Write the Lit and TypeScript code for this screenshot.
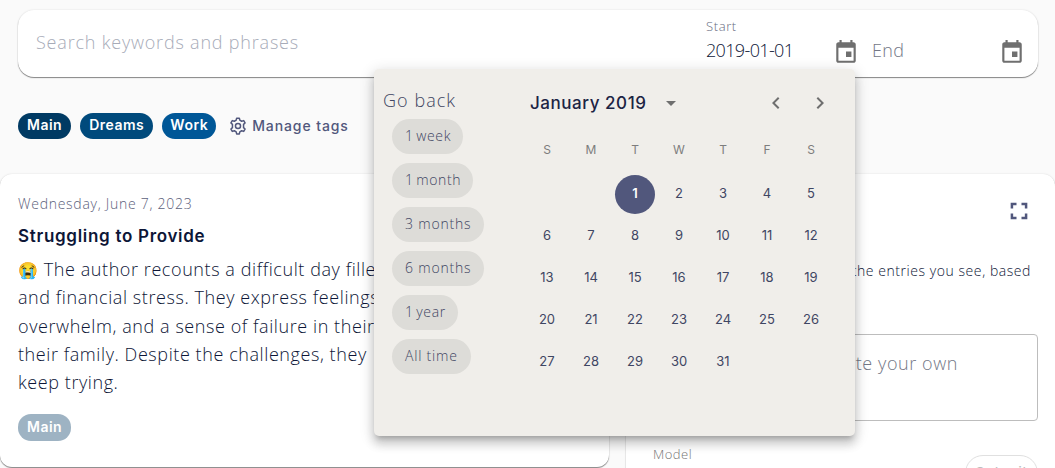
import {LitElement, html, css, svg} from 'lit';
import {customElement, property, state} from 'lit/decorators.js';
import {classMap} from 'lit/directives/class-map.js';

const ICONS = {
    event: svg`<path d="M19 3h-1V1h-2v2H8V1H6v2H5c-1.11 0-1.99.9-1.99 2L3 20c0 1.1.89 2 2 2h14c1.1 0 2-.9 2-2V5c0-1.1-.9-2-2-2zm0 17H5V8h14v12zm-2-8.5h-5v5h5v-5z"/>`,
    left: svg`<path d="M15.41 7.41 14 6l-6 6 6 6 1.41-1.41L10.83 12z"/>`,
    right: svg`<path d="M10 6 8.59 7.41 13.17 12l-4.58 4.59L10 18l6-6z"/>`,
    fullscreen: svg`<path d="M2 2h7v3H5v4H2zM15 2h7v7h-3V5h-4zM2 15h3v4h4v3H2zM19 15h3v7h-7v-3h4z"/>`,
    gear: svg`<g fill="none" stroke="currentColor" stroke-width="2" stroke-linejoin="round">
        <path d="M9.6 4.2 10.2 1.5h3.6l.6 2.7 2.5 1.45 2.7-.85 1.8 3.1-2 1.9v4.4l2 1.9-1.8 3.1-2.7-.85-2.5 1.45-.6 2.7h-3.6l-.6-2.7-2.5-1.45-2.7.85-1.8-3.1 2-1.9V9.8l-2-1.9 1.8-3.1 2.7.85z"/>
        <circle cx="12" cy="12" r="3.4"/>
    </g>`,
};

@customElement('app-icon')
export class AppIcon extends LitElement {
    static styles = css`
        :host {
            display: block;
            width: 24px;
            height: 24px;
            flex: none;
        }

        svg {
            display: block;
            width: 100%;
            height: 100%;
            fill: currentColor;
        }
    `;

    @property() name: keyof typeof ICONS = 'event';

    render() {
        return html`<svg viewBox="0 0 24 24">${ICONS[this.name]}</svg>`;
    }
}

@customElement('tag-chip')
export class TagChip extends LitElement {
    static styles = css`
        :host {
            display: block;
            box-sizing: border-box;
            height: 26px;
            padding: 0 9px;
            border-radius: 13px;
            background: #003a63;
            color: #fff;
            font: 600 14px/25px Inter, sans-serif;
            letter-spacing: 0.5px;
            text-align: center;
        }
    `;

    render() {
        return html`<slot></slot>`;
    }
}

@customElement('date-popup')
export class DatePopup extends LitElement {
    static styles = css`
        :host {
            display: flex;
            box-sizing: border-box;
            width: 481px;
            height: 367px;
            border-radius: 5px;
            background: #f0eeea;
            color: #3f4663;
            box-shadow: 0 5px 5px -3px rgba(0, 0, 0, 0.2), 0 8px 10px 1px rgba(0, 0, 0, 0.14), 0 3px 14px 2px rgba(0, 0, 0, 0.12);
        }

        .ranges {
            display: flex;
            flex-direction: column;
            align-items: flex-start;
            gap: 9px;
            box-sizing: border-box;
            width: 129px;
            padding: 20px 0 0 18px;
        }

        .heading {
            height: 21px;
            margin-left: -9px;
            font: 300 18px/23px "Open Sans", sans-serif;
            letter-spacing: 1.05px;
        }

        .range {
            box-sizing: border-box;
            height: 35px;
            padding: 0 13px 2px;
            border: none;
            border-radius: 18px;
            background: #dddcd8;
            color: inherit;
            font: 300 14px/33px "Open Sans", sans-serif;
            letter-spacing: 0.8px;
        }

        .range.single {
            padding-right: 12px;
            letter-spacing: 0.6px;
            word-spacing: -1.5px;
        }

        .calendar {
            width: 352px;
            padding: 14px 22px 0;
            box-sizing: border-box;
        }

        .header {
            display: flex;
            align-items: center;
            height: 40px;
            color: #6f6f6f;
        }

        .month {
            margin-left: 5px;
            color: #1c2444;
            font: 500 17px/24px Inter, sans-serif;
            letter-spacing: 0.55px;
        }

        .caret {
            margin-left: 19px;
            border: 5.5px solid transparent;
            border-top-color: currentColor;
            border-bottom: 0;
        }

        .arrows {
            display: flex;
            gap: 20px;
            margin: 0 1px 0 auto;
        }

        .grid {
            display: grid;
            grid-template-columns: repeat(7, 44px);
            justify-items: center;
            align-items: center;
        }

        .weekdays {
            height: 46px;
            padding-top: 4px;
            color: #7d7d7d;
            font: 400 12px/16px Inter, sans-serif;
        }

        .days {
            grid-auto-rows: 42px;
            font: 400 13px/36px Inter, sans-serif;
        }

        .day {
            width: 40px;
            height: 39px;
            border-radius: 50%;
            text-align: center;
        }

        .day.selected {
            background: #51577c;
            color: #fff;
            font-weight: 600;
        }
    `;

    @state() selected = 1;

    render() {
        const ranges = ['1 week', '1 month', '3 months', '6 months', '1 year', 'All time'];
        // January 2019 starts on a Tuesday
        const days = [0, 0, ...Array.from({length: 31}, (_, i) => i + 1)];
        return html`
            <div class="ranges">
                <div class="heading">Go back</div>
                ${ranges.map(r => html`
                    <button class=${classMap({range: true, single: r.startsWith('1')})}>${r}</button>`)}
            </div>
            <div class="calendar">
                <div class="header">
                    <span class="month">January 2019</span>
                    <span class="caret"></span>
                    <div class="arrows">
                        <app-icon name="left"></app-icon>
                        <app-icon name="right"></app-icon>
                    </div>
                </div>
                <div class="grid weekdays">${[...'SMTWTFS'].map(d => html`<span>${d}</span>`)}</div>
                <div class="grid days">
                    ${days.map(d => html`
                        <div class=${classMap({day: true, selected: d === this.selected})}
                             @click=${() => this._select(d)}>${d || null}</div>`)}
                </div>
            </div>
        `;
    }

    _select(day: number) {
        if (day) this.selected = day;
    }
}

@customElement('app-root')
export class AppRoot extends LitElement {
    static styles = css`
        :host {
            display: block;
            position: relative;
            box-sizing: border-box;
            width: 1055px;
            height: 468px;
            padding-top: 10px;
            overflow: hidden;
            background: #fafafa;
            color: #0d1637;
            font: 300 18px/28.3px "Open Sans", sans-serif;
            white-space: nowrap;
        }

        .surface {
            background: #fff;
            box-shadow: 0 1px 1px rgba(0, 0, 0, 0.45), 0 0 2px rgba(0, 0, 0, 0.12);
        }

        .search {
            display: flex;
            box-sizing: border-box;
            height: 67px;
            margin: 0 17px 0 18px;
            padding: 0 13px 0 18px;
            border-radius: 16px;
        }

        .placeholder {
            flex: 1;
            color: #a7abb8;
            line-height: 65px;
            letter-spacing: 0.8px;
        }

        .field {
            display: flex;
            box-sizing: border-box;
            width: 166px;
            color: #6f6f6f;
        }

        .field app-icon {
            width: 26px;
            height: 26px;
            margin: 29px 13px 0 auto;
        }

        .field.end app-icon {
            margin-right: 0;
        }

        .field.end {
            width: 153px;
        }

        .label {
            margin-top: 7px;
            color: #666a7d;
            font-size: 13px;
            line-height: 18px;
            letter-spacing: 0.6px;
        }

        .value {
            color: #0d1637;
            line-height: 30px;
            letter-spacing: -0.65px;
        }

        .empty {
            color: #737786;
            line-height: 80px;
            letter-spacing: 0.4px;
        }

        .tags {
            display: flex;
            align-items: center;
            gap: 9px;
            height: 97px;
            padding-left: 18px;
        }

        .tags tag-chip {
            line-height: 24px;
        }

        .dreams {
            background: #004a7c;
        }

        .tags .work {
            padding: 0 8px;
            background: #005797;
        }

        .manage {
            display: flex;
            align-items: center;
            gap: 5px;
            margin-left: 4px;
            color: #51577c;
            font: 500 14px/24px Inter, sans-serif;
            letter-spacing: 0.9px;
        }

        .manage app-icon {
            width: 18px;
            height: 18px;
        }

        .columns {
            display: grid;
            grid-template-columns: 609px 429px;
            gap: 17px;
        }

        .entry {
            box-sizing: border-box;
            height: 293px;
            padding: 18px;
            border-radius: 12px;
        }

        .date {
            color: #5c617b;
            font-size: 14px;
            line-height: 23px;
            letter-spacing: 0.73px;
        }

        .title {
            margin: 7px 0 5px;
            font: 600 17px/28px Inter, sans-serif;
            letter-spacing: 0.7px;
        }

        .summary {
            letter-spacing: 0.58px;
        }

        .emoji {
            display: inline-block;
            width: 20.5px;
            font: 16px/20px "Noto Color Emoji", sans-serif;
            letter-spacing: 0;
        }

        .entry tag-chip {
            width: 53px;
            height: 27px;
            margin-top: 18px;
            background: #9eb3c3;
        }

        .ask {
            box-sizing: border-box;
            height: 320px;
            padding: 27px 17px 0 18px;
            border-radius: 12px;
        }

        .expand {
            width: 20px;
            height: 20px;
            margin: 0 9px 0 auto;
            color: #51577c;
        }

        .hint {
            display: flex;
            justify-content: flex-end;
            margin: 37px 7px 0 0;
            font-size: 14px;
            line-height: 26px;
            letter-spacing: 0.56px;
        }

        .prompt {
            box-sizing: border-box;
            height: 87px;
            margin-top: 50px;
            padding: 14px 79px 0 0;
            border: 1px solid #bdbdbd;
            border-radius: 4px;
            color: #737786;
            text-align: right;
            letter-spacing: 0.58px;
        }

        .actions {
            display: flex;
            justify-content: space-between;
            padding-left: 9px;
            color: #757575;
            font-size: 13px;
            line-height: 20px;
            letter-spacing: 0.5px;
        }

        .model {
            margin-top: 23px;
        }

        .submit {
            box-sizing: border-box;
            width: 73px;
            height: 36px;
            margin-top: 34px;
            border: 1px solid #e0e0e0;
            border-radius: 18px;
            color: #bdbdbd;
            font: 400 15px/33px Inter, sans-serif;
            text-align: center;
        }

        .popup {
            position: absolute;
            left: 374px;
            top: 69px;
        }
    `;

    render() {
        return html`
            <div class="search surface">
                <div class="placeholder">Search keywords and phrases</div>
                <div class="field">
                    <div>
                        <div class="label">Start</div>
                        <div class="value">2019-01-01</div>
                    </div>
                    <app-icon name="event"></app-icon>
                </div>
                <div class="field end">
                    <div class="empty">End</div>
                    <app-icon name="event"></app-icon>
                </div>
            </div>
            <div class="tags">
                <tag-chip>Main</tag-chip>
                <tag-chip class="dreams">Dreams</tag-chip>
                <tag-chip class="work">Work</tag-chip>
                <div class="manage"><app-icon name="gear"></app-icon>Manage tags</div>
            </div>
            <div class="columns">
                <div class="entry surface">
                    <div class="date">Wednesday, June 7, 2023</div>
                    <div class="title">Struggling to Provide</div>
                    <div class="summary">
                        <span class="emoji">😭</span> The author recounts a difficult day filled<br>
                        and financial stress. They express feelings<br>
                        overwhelm, and a sense of failure in their<br>
                        their family. Despite the challenges, they<br>
                        keep trying.
                    </div>
                    <tag-chip>Main</tag-chip>
                </div>
                <div class="ask surface">
                    <app-icon class="expand" name="fullscreen"></app-icon>
                    <div class="hint">the entries you see, based</div>
                    <div class="prompt">write your own</div>
                    <div class="actions">
                        <span class="model">Model</span>
                        <div class="submit">Submit</div>
                    </div>
                </div>
            </div>
            <date-popup class="popup"></date-popup>
        `;
    }
}
